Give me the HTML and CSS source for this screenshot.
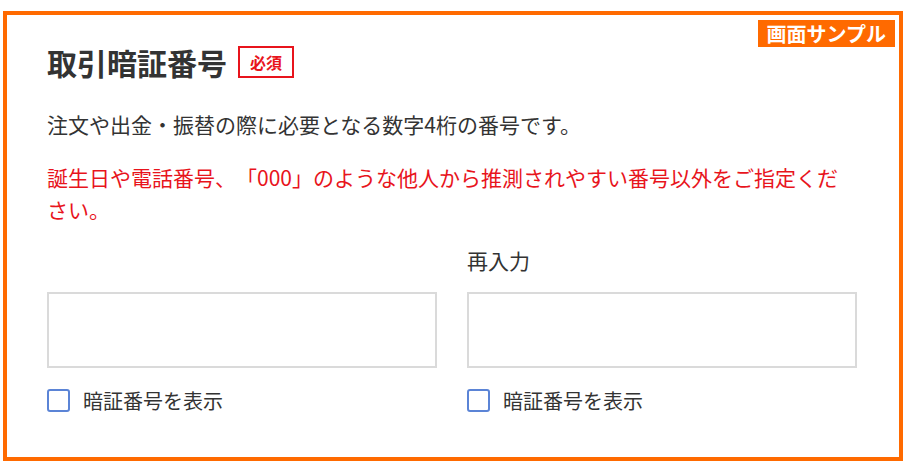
FILE: index.html
```html
<!DOCTYPE html>
<html lang="ja">
<head>
    <meta charset="UTF-8">
    <meta name="viewport" content="width=device-width, initial-scale=1.0">
    <title>取引暗証番号</title>
    <link rel="stylesheet" href="styles.css">
</head>
<body>
    <div class="sample">
        <span class="sample-tag">画面サンプル</span>
        <div class="title-row">
            <h1>取引暗証番号</h1>
            <span class="required">必須</span>
        </div>
        <p class="desc">注文や出金・振替の際に必要となる数字4桁の番号です。</p>
        <p class="warn">誕生日や電話番号、「000」のような他人から推測されやすい番号以外をご指定ください。</p>
        <div class="fields">
            <div class="field">
                <label class="field-label" for="pin1"></label>
                <input type="password" id="pin1" maxlength="4">
                <label class="show">
                    <input type="checkbox">
                    <span>暗証番号を表示</span>
                </label>
            </div>
            <div class="field">
                <label class="field-label" for="pin2">再入力</label>
                <input type="password" id="pin2" maxlength="4">
                <label class="show">
                    <input type="checkbox">
                    <span>暗証番号を表示</span>
                </label>
            </div>
        </div>
    </div>
</body>
</html>
```

FILE: styles.css
```css
body {
    margin: 11px 0 0 3px;
    padding: 0;
    background: #fff;
    font-family: "Noto Sans CJK JP", "Noto Sans", sans-serif;
    color: #333;
    text-spacing-trim: space-all; /* 句読点を詰めない */
}
.sample {
    position: relative;
    box-sizing: border-box;
    width: 900px;
    height: 450px;
    border: 4px solid #ff6a00;
    padding: 31px 42px 0 40px;
}
.sample-tag {
    position: absolute;
    top: 5px;
    right: 4px;
    background: #ff6a00;
    color: #fff;
    font-weight: bold;
    font-size: 20px;
    line-height: 27px;
    padding: 0 9px;
}
.title-row {
    display: flex;
    align-items: center;
    height: 32px;
}
h1 {
    margin: 0;
    font-size: 30px;
    font-weight: bold;
    line-height: 32px;
    color: #333;
}
.required {
    box-sizing: border-box;
    margin-left: 11px;
    height: 32px;
    padding: 0 10px;
    border: 2px solid #e8141c;
    color: #e8141c;
    font-size: 16px;
    font-weight: bold;
    line-height: 28px;
}
.desc {
    margin: 30px 0 0;
    font-size: 21px;
    line-height: 32px;
}
.warn {
    margin: 21px 0 0;
    font-size: 21px;
    line-height: 32px;
    color: #e8141c;
}
.fields {
    display: grid;
    grid-template-columns: 1fr 1fr;
    column-gap: 30px;
    margin-top: 19px;
}
.field-label {
    display: block;
    height: 32px;
    font-size: 21px;
    line-height: 32px;
}
.field input[type="password"] {
    display: block;
    box-sizing: border-box;
    width: 100%;
    height: 76px;
    margin-top: 16px;
    border: 2px solid #dadada;
    border-radius: 0;
    font-size: 21px;
    padding: 0 12px;
}
.show {
    display: flex;
    align-items: center;
    margin-top: 20px;
    height: 24px;
    font-size: 20px;
}
.show input {
    appearance: none;
    box-sizing: border-box;
    width: 23px;
    height: 23px;
    margin: 0 13px 0 0;
    border: 2px solid #5b84d6;
    border-radius: 3px;
    background: #fff;
}
```
